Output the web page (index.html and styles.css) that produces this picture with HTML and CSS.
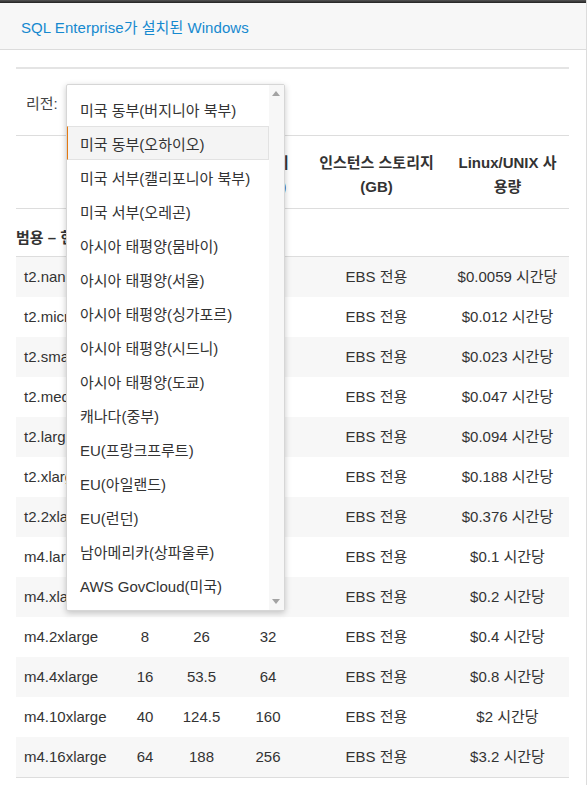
FILE: index.html
```html
<!DOCTYPE html>
<html lang="ko">
<head>
<meta charset="utf-8">
<title>SQL Enterprise가 설치된 Windows</title>
<link rel="stylesheet" href="styles.css">
</head>
<body>
<div class="page">
  <div class="topbar"></div>
  <div class="header"><span class="title">SQL Enterprise가 설치된 Windows</span></div>
  <div class="content">
    <div class="rule"></div>
    <div class="region">
      <span class="region-label">리전:</span>
      <div class="dropdown">
        <ul class="options">
          <li class="option">미국 동부(버지니아 북부)</li>
          <li class="option active">미국 동부(오하이오)</li>
          <li class="option">미국 서부(캘리포니아 북부)</li>
          <li class="option">미국 서부(오레곤)</li>
          <li class="option">아시아 태평양(뭄바이)</li>
          <li class="option">아시아 태평양(서울)</li>
          <li class="option">아시아 태평양(싱가포르)</li>
          <li class="option">아시아 태평양(시드니)</li>
          <li class="option">아시아 태평양(도쿄)</li>
          <li class="option">캐나다(중부)</li>
          <li class="option">EU(프랑크프루트)</li>
          <li class="option">EU(아일랜드)</li>
          <li class="option">EU(런던)</li>
          <li class="option">남아메리카(상파울루)</li>
          <li class="option">AWS GovCloud(미국)</li>
        </ul>
        <div class="scrollbar">
          <span class="arrow up"></span>
          <span class="arrow down"></span>
        </div>
      </div>
    </div>
    <table class="pricing">
      <colgroup>
        <col class="c-name"><col class="c-vcpu"><col class="c-ecu"><col class="c-mem"><col class="c-store"><col class="c-price">
      </colgroup>
      <thead>
        <tr>
          <th></th>
          <th>vCPU</th>
          <th>ECU</th>
          <th>메모리<br>(GiB)</th>
          <th>인스턴스 스토리지<br>(GB)</th>
          <th>Linux/UNIX 사<br>용량</th>
        </tr>
      </thead>
      <tbody>
        <tr class="section"><td colspan="6">범용 – 현재 세대</td></tr>
        <tr><td>t2.nano</td><td>1</td><td>가변</td><td>0.5</td><td>EBS 전용</td><td>$0.0059 시간당</td></tr>
        <tr><td>t2.micro</td><td>1</td><td>가변</td><td>1</td><td>EBS 전용</td><td>$0.012 시간당</td></tr>
        <tr><td>t2.small</td><td>1</td><td>가변</td><td>2</td><td>EBS 전용</td><td>$0.023 시간당</td></tr>
        <tr><td>t2.medium</td><td>2</td><td>가변</td><td>4</td><td>EBS 전용</td><td>$0.047 시간당</td></tr>
        <tr><td>t2.large</td><td>2</td><td>가변</td><td>8</td><td>EBS 전용</td><td>$0.094 시간당</td></tr>
        <tr><td>t2.xlarge</td><td>4</td><td>가변</td><td>16</td><td>EBS 전용</td><td>$0.188 시간당</td></tr>
        <tr><td>t2.2xlarge</td><td>8</td><td>가변</td><td>32</td><td>EBS 전용</td><td>$0.376 시간당</td></tr>
        <tr><td>m4.large</td><td>2</td><td>6.5</td><td>8</td><td>EBS 전용</td><td>$0.1 시간당</td></tr>
        <tr><td>m4.xlarge</td><td>4</td><td>13</td><td>16</td><td>EBS 전용</td><td>$0.2 시간당</td></tr>
        <tr><td>m4.2xlarge</td><td>8</td><td>26</td><td>32</td><td>EBS 전용</td><td>$0.4 시간당</td></tr>
        <tr><td>m4.4xlarge</td><td>16</td><td>53.5</td><td>64</td><td>EBS 전용</td><td>$0.8 시간당</td></tr>
        <tr><td>m4.10xlarge</td><td>40</td><td>124.5</td><td>160</td><td>EBS 전용</td><td>$2 시간당</td></tr>
        <tr><td>m4.16xlarge</td><td>64</td><td>188</td><td>256</td><td>EBS 전용</td><td>$3.2 시간당</td></tr>
      </tbody>
    </table>
  </div>
</div>
</body>
</html>
```
FILE: styles.css
```css
html, body {
  margin: 0;
  padding: 0;
  background: #fff;
}
body {
  font-family: "Liberation Sans", "Noto Sans CJK KR", sans-serif;
  color: #333;
  font-size: 15px;
  overflow: hidden;
}
.page {
  width: 587px;
  height: 785px;
  box-sizing: border-box;
  border-right: 1px solid #dcdcdc;
  overflow: hidden;
}
.topbar {
  height: 3px;
  background: linear-gradient(#555, #222);
}
.header {
  height: 46px;
  background: #f7f7f7;
  border-bottom: 1px solid #dcdcdc;
  display: flex;
  align-items: center;
  padding: 0 21px;
}
.title {
  color: #1689cf;
  font-size: 15px;
  letter-spacing: 0.05px;
}
.content {
  padding: 17px 17px 0 16px;
}
.rule {
  height: 2px;
  background: #e4e4e4;
}
.region {
  position: relative;
  height: 66px;
  display: flex;
  align-items: center;
  padding-left: 10px;
}
.region-label {
  color: #444;
  font-size: 15px;
}
.dropdown {
  position: absolute;
  left: 50px;
  top: 15px;
  width: 219px;
  height: 527px;
  box-sizing: border-box;
  background: #fff;
  border: 1px solid #d6d6d6;
  border-radius: 2px;
  box-shadow: 0 2px 6px rgba(0, 0, 0, 0.22);
  display: flex;
  z-index: 5;
}
.options {
  list-style: none;
  margin: 0;
  padding: 7px 0 0;
  flex: 1;
}
.option {
  height: 34px;
  box-sizing: border-box;
  display: flex;
  align-items: center;
  padding-left: 13px;
  font-size: 15px;
  color: #333;
  white-space: nowrap;
}
.option.active {
  background: #f4f4f4;
  border: 1px solid #e2e2e2;
  border-left: 1px solid #e47911;
  padding-left: 12px;
}
.scrollbar {
  width: 15px;
  background: #f7f7f7;
  position: relative;
}
.arrow {
  position: absolute;
  left: 3px;
  width: 0;
  height: 0;
  border-left: 4px solid transparent;
  border-right: 4px solid transparent;
}
.arrow.up {
  top: 6px;
  border-bottom: 5px solid #a3a3a3;
}
.arrow.down {
  bottom: 6px;
  border-top: 5px solid #a3a3a3;
}
.pricing {
  width: 553px;
  border-collapse: collapse;
  table-layout: fixed;
}
.c-name { width: 100px; }
.c-vcpu { width: 58px; }
.c-ecu { width: 55px; }
.c-mem { width: 78px; }
.c-store { width: 139px; }
.c-price { width: 123px; }
.pricing thead th {
  border-top: 1px solid #ddd;
  border-bottom: 1px solid #ddd;
  padding: 15px 4px 9px;
  line-height: 24px;
  font-size: 15px;
  font-weight: bold;
  text-align: center;
  color: #333;
}
.pricing td {
  padding: 10px 4px;
  line-height: 20px;
  text-align: center;
  white-space: nowrap;
}
.pricing td:first-child {
  text-align: left;
  padding-left: 8px;
}
.pricing tbody tr:nth-child(even) {
  background: #f7f7f7;
}
.pricing tr.section td {
  padding: 19px 0 8px;
  font-weight: bold;
  text-align: left;
  border-bottom: 1px solid #ddd;
  background: #fff;
}
.pricing tbody tr:last-child td {
  border-bottom: 1px solid #ddd;
}
```
